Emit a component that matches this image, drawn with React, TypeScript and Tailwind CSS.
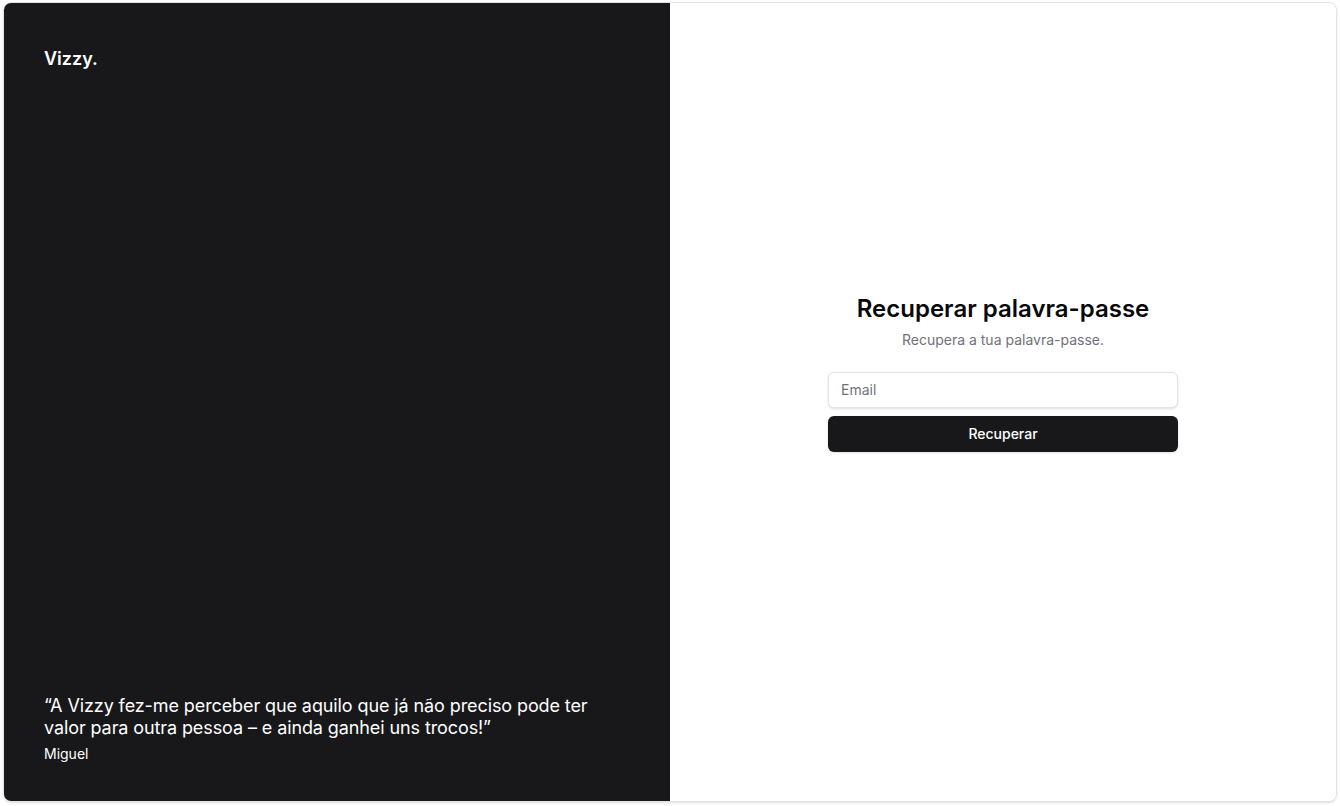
export default function App() {
  return (
    <div
      className="h-[806px] w-[1340px] bg-white px-[3px] pt-[2px]"
      style={{ fontFamily: 'Inter, "Noto Sans", sans-serif' }}
    >
      <div className="grid h-[800px] grid-cols-2 overflow-hidden rounded-lg border border-zinc-200 shadow-sm">
        <div className="flex flex-col justify-between bg-[#18181b] px-10 pt-[42px] pb-[37px] text-white">
          <div className="text-lg font-semibold leading-7">Vizzy.</div>
          <blockquote className="flex flex-col gap-[5px]">
            <p className="text-[18px] leading-[22px] tracking-[-0.1px]">
              &ldquo;A Vizzy fez-me perceber que aquilo que já não preciso pode ter valor para outra pessoa – e
              ainda ganhei uns trocos!&rdquo;
            </p>
            <footer className="text-sm leading-5">Miguel</footer>
          </blockquote>
        </div>
        <div className="flex flex-col items-center justify-center pb-[60px]">
          <div className="flex w-[350px] flex-col gap-[22px]">
            <div className="flex flex-col gap-[5px] text-center">
              <h1 className="text-2xl font-semibold text-zinc-950">Recuperar palavra-passe</h1>
              <p className="text-sm text-zinc-500">Recupera a tua palavra-passe.</p>
            </div>
            <form className="flex flex-col gap-2" onSubmit={(e) => e.preventDefault()}>
              <input
                type="email"
                placeholder="Email"
                className="h-9 w-full rounded-md border border-zinc-200 bg-white px-3 text-sm text-zinc-950 shadow-sm outline-none placeholder:text-zinc-500"
              />
              <button
                type="submit"
                className="h-9 w-full rounded-md bg-[#18181b] text-sm font-medium text-white shadow"
              >
                Recuperar
              </button>
            </form>
          </div>
        </div>
      </div>
    </div>
  )
}
